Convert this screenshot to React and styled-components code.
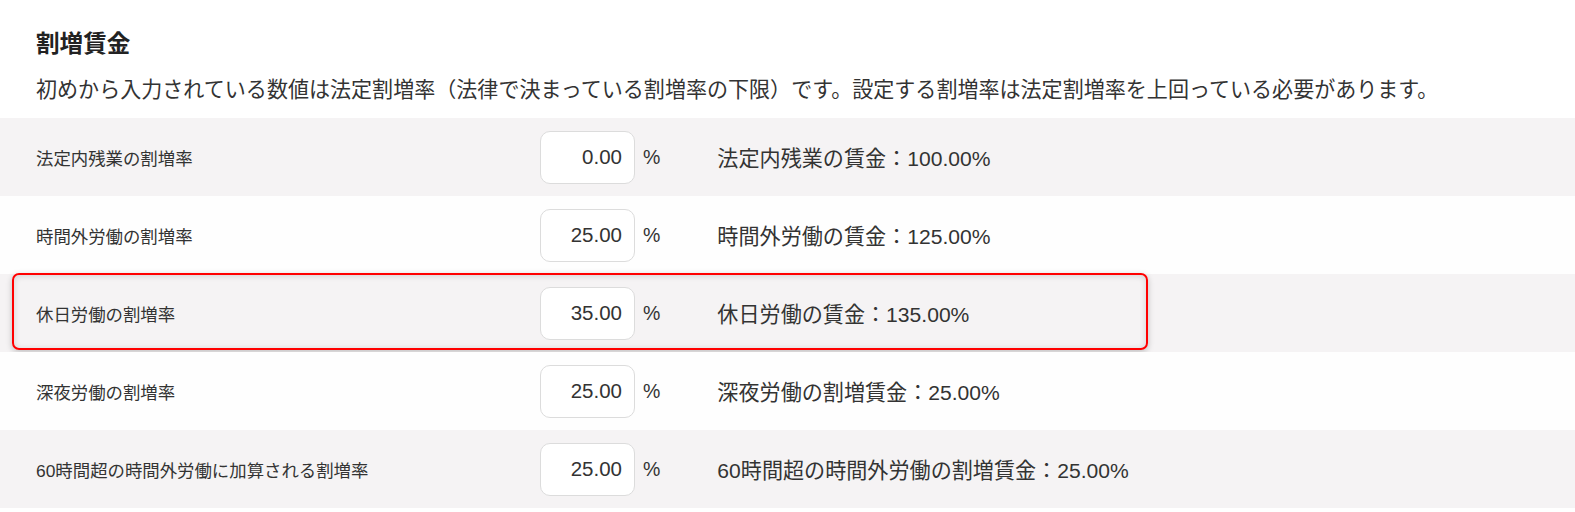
import React from 'react';
import styled, { createGlobalStyle } from 'styled-components';

const rates = [
  { label: '法定内残業の割増率', value: '0.00', result: '法定内残業の賃金：100.00%' },
  { label: '時間外労働の割増率', value: '25.00', result: '時間外労働の賃金：125.00%' },
  { label: '休日労働の割増率', value: '35.00', result: '休日労働の賃金：135.00%', marked: true },
  { label: '深夜労働の割増率', value: '25.00', result: '深夜労働の割増賃金：25.00%' },
  { label: '60時間超の時間外労働に加算される割増率', value: '25.00', result: '60時間超の時間外労働の割増賃金：25.00%' },
];

const App = () => {
  return (
    <>
      <GlobalStyle />
      <Section>
        <Title>割増賃金</Title>
        <Description>
          初めから入力されている数値は法定割増率（法律で決まっている割増率の下限）です。設定する割増率は法定割増率を上回っている必要があります。
        </Description>
        <RateList>
          {rates.map((r, i) => (
            <Row key={r.label} $striped={i % 2 === 0}>
              {r.marked && <Highlight />}
              <Label>{r.label}</Label>
              <RateInput type="text" defaultValue={r.value} />
              <Unit>%</Unit>
              <Result>{r.result}</Result>
            </Row>
          ))}
        </RateList>
      </Section>
    </>
  );
};

export default App;

const GlobalStyle = createGlobalStyle`
  body {
    margin: 0;
    background: #fff;
    font-family: 'Liberation Sans', 'Noto Sans CJK JP', sans-serif;
    color: #333;
  }
`;

const Section = styled.section`
  padding-top: 28px;
`;

const Title = styled.h2`
  margin: 0;
  padding-left: 36px;
  font-size: 23.6px;
  line-height: 32px;
  font-weight: 700;
  color: #222;
`;

const Description = styled.p`
  margin: 14px 0 0;
  padding-left: 36px;
  font-size: 21.05px;
  line-height: 32px;
  color: #333;
  white-space: nowrap;
`;

const RateList = styled.div`
  margin-top: 12px;
`;

const Row = styled.div`
  position: relative;
  display: flex;
  align-items: center;
  height: 78px;
  padding-left: 36px;
  background: ${(p) => (p.$striped ? '#f5f3f4' : '#fefefe')};
`;

const Highlight = styled.div`
  position: absolute;
  left: 12px;
  width: 1136px;
  top: -1px;
  bottom: 2px;
  border: 2px solid #ff0000;
  border-radius: 7px;
  box-shadow: 0 2px 6px rgba(0, 0, 0, 0.22), inset 0 1px 6px rgba(0, 0, 0, 0.14);
  pointer-events: none;
  box-sizing: border-box;
`;

const Label = styled.div`
  width: 504px;
  flex: none;
  font-size: 17.4px;
  color: #333;
`;

const RateInput = styled.input`
  box-sizing: border-box;
  width: 95px;
  height: 53px;
  padding: 0 12px 0 8px;
  border: 1px solid #dcdcdc;
  border-radius: 10px;
  background: #fff;
  text-align: right;
  font-family: 'Liberation Sans', 'Noto Sans CJK JP', sans-serif;
  font-size: 20.5px;
  color: #333;
  outline: none;
`;

const Unit = styled.span`
  margin-left: 8px;
  font-size: 19.5px;
  color: #333;
`;

const Result = styled.span`
  margin-left: 57px;
  font-size: 21.1px;
  color: #333;
`;
